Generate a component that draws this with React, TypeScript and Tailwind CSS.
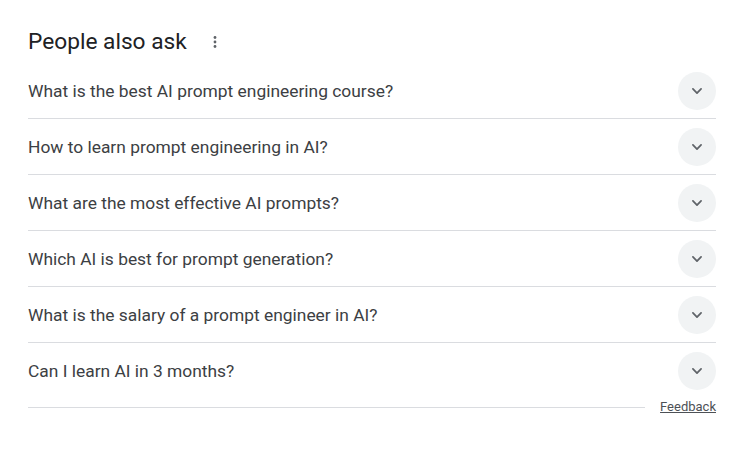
import React from "react";

const questions = [
  "What is the best AI prompt engineering course?",
  "How to learn prompt engineering in AI?",
  "What are the most effective AI prompts?",
  "Which AI is best for prompt generation?",
  "What is the salary of a prompt engineer in AI?",
  "Can I learn AI in 3 months?",
];

export default function App() {
  return (
    <div className="w-[750px] h-[450px] bg-white" style={{ fontFamily: "Roboto, 'Liberation Sans', Arial, sans-serif" }}>
      <div className="pl-[28px] pr-[34px] pt-[28px]">
        <div className="flex items-center h-[28px]">
          <span className="text-[22.7px] text-[#202124] leading-[28px]">People also ask</span>
          <svg className="ml-[20px]" width="16" height="16" viewBox="0 0 16 16">
            <circle cx="8" cy="3.5" r="1.4" fill="#5f6368" />
            <circle cx="8" cy="8" r="1.4" fill="#5f6368" />
            <circle cx="8" cy="12.5" r="1.4" fill="#5f6368" />
          </svg>
        </div>
        <div className="mt-[7px]">
          {questions.map((q, i) => (
            <div key={i} className={"flex items-center justify-between h-[56px] " + (i < questions.length - 1 ? "border-b border-[#dadce0]" : "")}>
              <span className="text-[17.4px] text-[#3c4043] pt-[1px]">{q}</span>
              <div className="w-[38px] h-[38px] rounded-full bg-[#f1f3f4] flex items-center justify-center">
                <svg width="14" height="14" viewBox="0 0 24 24" fill="none">
                  <path d="M5 8.5l7 7 7-7" stroke="#5f6368" strokeWidth="3" strokeLinecap="round" strokeLinejoin="round" />
                </svg>
              </div>
            </div>
          ))}
        </div>
        <div className="flex items-center">
          <div className="flex-1 border-t border-[#dadce0] mr-[15px]" />
          <span className="text-[13px] text-[#4d5156] underline leading-[16px]">Feedback</span>
        </div>
      </div>
    </div>
  );
}
